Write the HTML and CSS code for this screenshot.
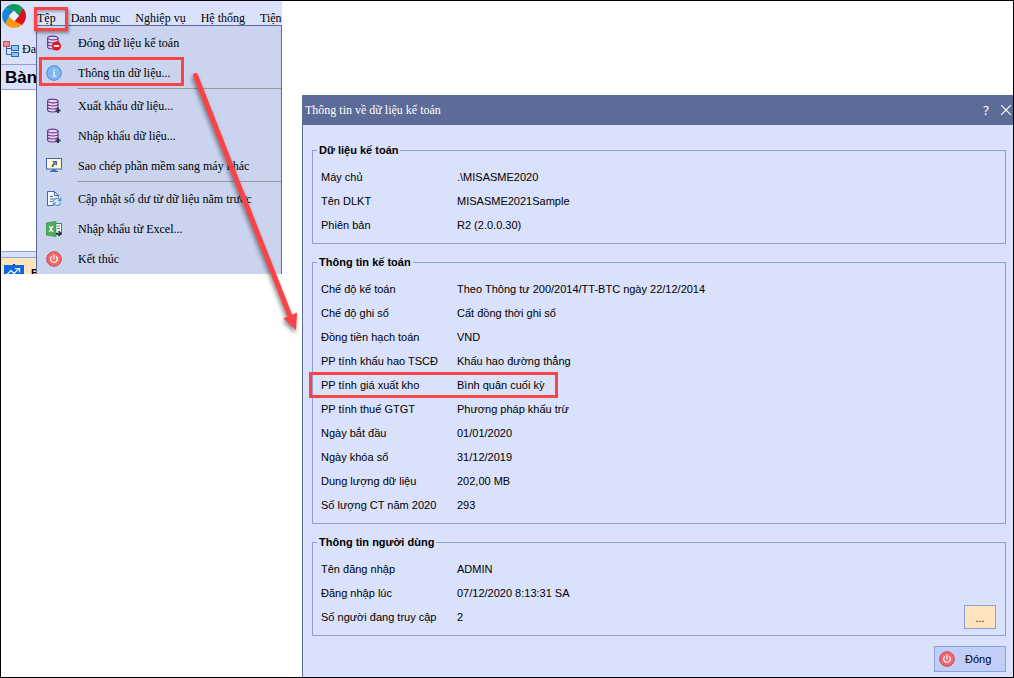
FILE: index.html
```html
<!DOCTYPE html>
<html lang="vi">
<head>
<meta charset="utf-8">
<meta name="viewport" content="width=device-width, initial-scale=1">
<title>Thông tin về dữ liệu kế toán</title>
<link rel="stylesheet" href="styles.css">
</head>
<body>
<svg class="defs" width="0" height="0" aria-hidden="true">
  <symbol id="power" viewBox="0 0 16 16">
    <circle cx="8" cy="8" r="7.3" fill="#f7676d" stroke="#cf4149" stroke-width="1"/>
    <path d="M5.6 5.7a3.3 3.3 0 1 0 4.8 0M8 3.9v4" fill="none" stroke="#fff" stroke-width="1.2" stroke-linecap="round"/>
  </symbol>
  <symbol id="database" viewBox="0 0 16 16">
    <g fill="#e6d6f1" stroke="#683694" stroke-width="1.1">
      <path d="M1.6 3v9c0 2.6 10.4 2.6 10.4 0V3"/>
      <ellipse cx="6.8" cy="3" rx="5.2" ry="1.9"/>
      <path d="M1.6 6c0 2.6 10.4 2.6 10.4 0M1.6 9c0 2.6 10.4 2.6 10.4 0" fill="none"/>
    </g>
  </symbol>
</svg>
<main class="canvas">
  <section class="app">
    <header class="menubar">
      <svg class="logo" viewBox="0 0 24 24" aria-hidden="true">
        <path d="M3.8 3.4A12 12 0 0 1 20 3L13.500 9.500 11 7.200z" fill="#0b9b5a"/>
        <path d="M20.800 3.900A12 12 0 0 1 20.800 20.200L14.300 13.700 17 11z" fill="#d9121b"/>
        <path d="M20 21A12 12 0 0 1 3.900 20.800L10.300 14.400 13 17z" fill="#fb9806"/>
        <path d="M3.100 20A12 12 0 0 1 3.100 4.100L9.700 10.300 7 13z" fill="#1685dc"/>
        <path d="M3.8 3.400 11.500 7 8.200 11 3.100 4.100z" fill="#1685dc"/>
        <path d="M20 3 20.800 3.900 16.800 12 13 8.700z" fill="#0b9b5a"/>
        <path d="M20.800 20.200 20 21 12.500 17 15.500 13z" fill="#d9121b"/>
        <path d="M3.900 20.800 3.100 20 7.200 12.500 11 15.500z" fill="#fb9806"/>
        <path d="M12 6.500 17.200 12 12 17.200 6.700 12z" fill="#eef1fd"/>
      </svg>
      <nav class="menus">
        <button class="menu menu-open" type="button">Tệp</button>
        <button class="menu" type="button">Danh mục</button>
        <button class="menu" type="button">Nghiệp vụ</button>
        <button class="menu" type="button">Hệ thống</button>
        <button class="menu" type="button">Tiện</button>
      </nav>
    </header>
    <div class="toolbar">
      <svg width="16" height="16" viewBox="0 0 16 16" aria-hidden="true">
        <path d="M3.5 6v7.5H8M3.5 7.5H8" fill="none" stroke="#2d5f9e"/>
        <rect x=".5" y=".5" width="6" height="5" fill="#f28a8a" stroke="#c84e52"/>
        <rect x="8.5" y="4.5" width="7" height="5" fill="#8ec5f4" stroke="#286bb5"/>
        <rect x="8.5" y="11.5" width="7" height="4" fill="#8ec5f4" stroke="#286bb5"/>
      </svg>
      <span>Đa</span>
    </div>
    <h1 class="heading">Bàn</h1>
    <div class="blank"></div>
    <div class="splitter"></div>
    <div class="tab">
      <svg width="20" height="10" viewBox="0 0 20 10" aria-hidden="true">
        <path d="M9 0h2v2H9z" fill="#333"/>
        <rect y="1" width="20" height="9" fill="#0b68e5"/>
        <path d="M3 10.500l4-4 3 3 5-5M11 4.500h4.500v4" fill="none" stroke="#fff" stroke-width="1.2"/>
      </svg>
      <span>B</span>
    </div>

    <div class="popup">
      <button class="item" type="button">
        <svg class="icon" viewBox="0 0 16 16"><use href="#database"/><circle cx="10.5" cy="11" r="4.5" fill="#e5101c"/><path d="M7.8 11h5.4" stroke="#fff" stroke-width="1.8"/></svg>
        Đóng dữ liệu kế toán
      </button>
      <button class="item item-marked" type="button">
        <svg class="icon" viewBox="0 0 16 16"><circle cx="8" cy="8" r="7.3" fill="#7db7f6" stroke="#4888d2"/><path d="M7 7h1.2v4M6.7 11.2h2.8M7.5 4.6h1.3" fill="none" stroke="#fff" stroke-width="1.1"/></svg>
        Thông tin dữ liệu...
      </button>
      <hr class="rule">
      <button class="item" type="button">
        <svg class="icon" viewBox="0 0 16 16"><use href="#database"/><path d="M9.5 12.5h5M12 10v5" stroke="#2e3c4e" stroke-width="2"/></svg>
        Xuất khẩu dữ liệu...
      </button>
      <button class="item" type="button">
        <svg class="icon" viewBox="0 0 16 16"><use href="#database"/><path d="M9.5 12.5h5M12 10v5" stroke="#2e3c4e" stroke-width="2"/></svg>
        Nhập khẩu dữ liệu...
      </button>
      <button class="item" type="button">
        <svg class="icon" viewBox="0 0 16 16"><rect x=".5" y=".5" width="15" height="10.5" fill="#fffbd9" stroke="#3d65ad"/><path d="M6 12h4v1H6zM4 13.5h8" fill="#3d65ad" stroke="#3d65ad"/><path d="M6.5 9c0-2 .8-3 2.500-3.500M6.800 3.800h3.400v3.400" fill="none" stroke="#3b5685" stroke-width="1.5"/></svg>
        Sao chép phần mềm sang máy khác
      </button>
      <hr class="rule">
      <button class="item" type="button">
        <svg class="icon" viewBox="0 0 16 16"><path d="M1.5.5h7l4 4v10h-11z" fill="#f4f7ff" stroke="#48659b"/><path d="M8.5.5v4h4M4 5.5h3M4 8h4M4 10.5h3" fill="none" stroke="#48659b"/><circle cx="11" cy="11" r="4.8" fill="#dce9f8"/><path d="M7.3 10.500a3.700 3.700 0 0 1 7-1M14.800 6.800v3h-3M14.700 11.500a3.700 3.700 0 0 1-7 1M7.200 15v-3h3" fill="none" stroke="#5a93c9" stroke-width="1.2"/></svg>
        Cập nhật số dư từ dữ liệu năm trước
      </button>
      <button class="item" type="button">
        <svg class="icon" viewBox="0 0 16 16"><rect x="9" y="2.5" width="6.5" height="11" fill="#fff" stroke="#4d8758"/><path d="M11 5h3M11 7.500h3" stroke="#4d8758"/><path d="M0 2 10 .3v15.400L0 14z" fill="#4fae5b" stroke="#388846" stroke-width=".6"/><path d="M3.2 5l3.800 6M7 5l-3.800 6" stroke="#fff" stroke-width="1.4"/><path d="M10 12.500h5M12.500 10l2.500 2.500-2.500 2.500" fill="none" stroke="#26313b" stroke-width="1.5"/></svg>
        Nhập khẩu từ Excel...
      </button>
      <button class="item" type="button">
        <svg class="icon" viewBox="0 0 16 16"><use href="#power"/></svg>
        Kết thúc
      </button>
    </div>
  </section>

  <section class="dialog" role="dialog" aria-labelledby="dialog-title">
    <header class="titlebar">
      <h2 id="dialog-title">Thông tin về dữ liệu kế toán</h2>
      <button class="title-button" type="button" aria-label="Trợ giúp">?</button>
      <button class="title-button" type="button" aria-label="Đóng cửa sổ"><svg width="10" height="10" viewBox="0 0 10 10"><path d="M0 0l10 10M10 0L0 10" stroke="#fff" stroke-width="1.2"/></svg></button>
    </header>
    <div class="body">
      <fieldset class="group">
        <legend>Dữ liệu kế toán</legend>
        <dl class="facts">
          <div class="row"><dt>Máy chủ</dt><dd>.\MISASME2020</dd></div>
          <div class="row"><dt>Tên DLKT</dt><dd>MISASME2021Sample</dd></div>
          <div class="row"><dt>Phiên bản</dt><dd>R2 (2.0.0.30)</dd></div>
        </dl>
      </fieldset>
      <fieldset class="group">
        <legend>Thông tin kế toán</legend>
        <dl class="facts">
          <div class="row"><dt>Chế độ kế toán</dt><dd>Theo Thông tư 200/2014/TT-BTC ngày 22/12/2014</dd></div>
          <div class="row"><dt>Chế độ ghi sổ</dt><dd>Cất đồng thời ghi sổ</dd></div>
          <div class="row"><dt>Đồng tiền hạch toán</dt><dd>VND</dd></div>
          <div class="row"><dt>PP tính khấu hao TSCĐ</dt><dd>Khấu hao đường thẳng</dd></div>
          <div class="row row-marked"><dt>PP tính giá xuất kho</dt><dd>Bình quân cuối kỳ</dd></div>
          <div class="row"><dt>PP tính thuế GTGT</dt><dd>Phương pháp khấu trừ</dd></div>
          <div class="row"><dt>Ngày bắt đầu</dt><dd>01/01/2020</dd></div>
          <div class="row"><dt>Ngày khóa sổ</dt><dd>31/12/2019</dd></div>
          <div class="row"><dt>Dung lượng dữ liệu</dt><dd>202,00 MB</dd></div>
          <div class="row"><dt>Số lượng CT năm 2020</dt><dd>293</dd></div>
        </dl>
      </fieldset>
      <fieldset class="group">
        <legend>Thông tin người dùng</legend>
        <div class="with-button">
          <dl class="facts">
            <div class="row"><dt>Tên đăng nhập</dt><dd>ADMIN</dd></div>
            <div class="row"><dt>Đăng nhập lúc</dt><dd>07/12/2020 8:13:31 SA</dd></div>
            <div class="row"><dt>Số người đang truy cập</dt><dd>2</dd></div>
          </dl>
          <button class="more" type="button">...</button>
        </div>
      </fieldset>
      <footer class="actions">
        <button class="close" type="button"><svg class="icon" viewBox="0 0 16 16"><use href="#power"/></svg>Đóng</button>
      </footer>
    </div>
  </section>

  <svg class="arrow" width="120" height="270" viewBox="0 0 120 270" aria-hidden="true">
    <path d="M14.500 5.500 109 246" stroke="#fb4345" stroke-width="5" stroke-linecap="round"/>
    <path d="M102.500 248.500 116 242.500 115 260z" fill="#fb4345"/>
  </svg>
</main>
</body>
</html>
```
FILE: styles.css
```css
*,
*::after {
  box-sizing: border-box;
}

body {
  margin: 0;
  background: #fff;
  color: #000;
  font: 11px/24px "Liberation Sans", Arial, sans-serif;
}

button {
  font: inherit;
  color: inherit;
}

.defs {
  position: absolute;
}

.canvas {
  position: relative;
  display: grid;
  grid-template-columns: 281px minmax(0, 1fr);
  column-gap: 20px;
  min-height: 100vh;
  border: 1px solid #000;
}

.icon {
  flex: none;
  width: 16px;
  height: 16px;
}

/* Main window with the open menu */
.app {
  position: relative;
  align-self: start;
  overflow: hidden;
  background: #d9e1fb;
  font-family: "Liberation Serif", "Times New Roman", serif;
  font-size: 12px;
}

.menubar {
  display: flex;
  gap: 8px;
  height: 32px;
  padding-left: 1px;
}

.logo {
  flex: none;
  width: 24px;
  height: 24px;
  margin-top: 3px;
}

.menus {
  position: relative;
  z-index: 2;
  display: flex;
  align-self: start;
  gap: 9px;
  padding-top: 9px;
}

.menu {
  height: 16px;
  padding: 0 3px;
  border: 0;
  background: none;
  line-height: 16px;
  white-space: nowrap;
}

.menu-open {
  position: relative;
}

.menu-open::after,
.item-marked::after,
.row-marked::after {
  content: "";
  position: absolute;
  z-index: 3;
  border: 3px solid #fb4345;
  pointer-events: none;
}

.menu-open::after {
  top: -3px;
  left: 0;
  width: 34px;
  height: 24px;
  box-shadow: 1px 2px 3px #0006, inset 1px 2px 3px #0004;
}

.toolbar {
  display: flex;
  align-items: center;
  gap: 3px;
  height: 31px;
  padding-left: 2px;
}

.heading {
  height: 26px;
  margin: 0;
  padding-left: 4px;
  border: solid #8c9fdf;
  border-width: 1px 0;
  font: bold 17px/25px "Liberation Sans", Arial, sans-serif;
}

.blank {
  height: 161px;
  background: #fff;
}

.splitter {
  height: 7px;
  border: solid #8c9fdf;
  border-width: 1px 0;
}

.tab {
  display: flex;
  align-items: flex-end;
  gap: 7px;
  height: 16px;
  padding: 0 3px;
  overflow: hidden;
  background: #fde4bc;
  font: bold 11px/12px "Liberation Sans", Arial, sans-serif;
}

.tab span {
  height: 7px;
}

.popup {
  position: absolute;
  z-index: 1;
  inset: 24px 0 0 35px;
  padding-top: 2px;
  border: solid #5c6b98;
  border-width: 1px 1px 0;
  background: #cad4ef;
}

.item {
  position: relative;
  display: flex;
  align-items: center;
  gap: 16px;
  width: 100%;
  height: 30px;
  padding: 0 9px;
  border: 0;
  background: none;
  white-space: nowrap;
}

.item-marked::after {
  top: -1px;
  left: 2px;
  width: 145px;
  height: 29px;
}

.rule {
  height: 3px;
  margin: 0 0 0 40px;
  border: 0;
  border-top: 1px solid #999aa2;
}

/* Dialog */
.dialog {
  margin-top: 94px;
  border-left: 1px solid #5d6b98;
  background: #d9e1fb;
}

.titlebar {
  display: flex;
  align-items: center;
  gap: 12px;
  height: 30px;
  padding: 0 2px;
  background: #5d6b98;
  color: #fff;
}

.titlebar h2 {
  flex: 1;
  margin: 0;
  font: 12px/30px "Liberation Serif", "Times New Roman", serif;
}

.title-button {
  display: flex;
  padding: 0;
  border: 0;
  background: none;
  font: 13px/16px "Noto Sans", sans-serif;
}

.body {
  display: grid;
  gap: 10px;
  padding: 17px 7px 5px 9px;
}

.group {
  min-width: 0;
  margin: 0;
  padding: 7px 9px 6px 0;
  border: 1px solid #8c9fdf;
}

.group legend {
  margin-left: 4px;
  padding: 0 2px;
  font-weight: bold;
  line-height: 16px;
}

.facts {
  flex: 1;
  margin: 0;
  padding-left: 8px;
}

.row {
  position: relative;
  display: grid;
  grid-template-columns: 136px minmax(0, 1fr);
}

.row dd {
  margin: 0;
}

.row-marked::after {
  top: -1px;
  left: -12px;
  width: 249px;
  height: 26px;
}

.with-button {
  display: flex;
  align-items: flex-end;
}

.more {
  width: 32px;
  height: 24px;
  padding: 0;
  border: 1px solid #8c9fdf;
  background: #fde4bc;
  line-height: 24px;
}

.actions {
  display: flex;
  justify-content: flex-end;
}

.close {
  display: flex;
  align-items: center;
  gap: 10px;
  width: 72px;
  height: 26px;
  padding: 0 4px;
  border: 1px solid #8c9fdf;
  background: #c1cef8;
}

.arrow {
  position: absolute;
  z-index: 4;
  top: 69px;
  left: 180px;
  filter: drop-shadow(-1px 3px 2px #0007);
  pointer-events: none;
}
```
